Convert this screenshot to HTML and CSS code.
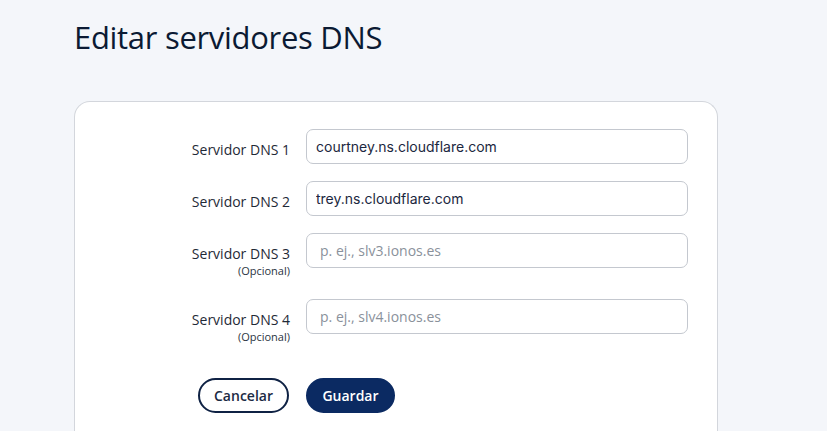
FILE: index.html
```html
<!DOCTYPE html>
<html lang="es">
<head>
<meta charset="utf-8">
<title>Editar servidores DNS</title>
<link rel="stylesheet" href="styles.css">
</head>
<body>
<main class="page">
  <h1 class="title">Editar servidores DNS</h1>
  <section class="card">
    <form class="form">
      <label class="label" for="dns1"><span class="label-main">Servidor DNS 1</span></label>
      <input class="field filled" id="dns1" type="text" value="courtney.ns.cloudflare.com">

      <label class="label" for="dns2"><span class="label-main">Servidor DNS 2</span></label>
      <input class="field filled" id="dns2" type="text" value="trey.ns.cloudflare.com">

      <label class="label" for="dns3"><span class="label-main">Servidor DNS 3</span><span class="label-sub">(Opcional)</span></label>
      <input class="field" id="dns3" type="text" placeholder="p. ej., slv3.ionos.es">

      <label class="label" for="dns4"><span class="label-main">Servidor DNS 4</span><span class="label-sub">(Opcional)</span></label>
      <input class="field" id="dns4" type="text" placeholder="p. ej., slv4.ionos.es">

      <button type="button" class="btn btn-outline">Cancelar</button>
      <button type="submit" class="btn btn-primary">Guardar</button>
    </form>
  </section>
</main>
</body>
</html>
```

FILE: styles.css
```css
* { box-sizing: border-box; }
html, body { margin: 0; padding: 0; }
body {
  background: #f4f6fa;
  font-family: "Open Sans", "Liberation Sans", sans-serif;
  color: #1d2a3d;
  height: 431px;
  overflow: hidden;
}
.page {
  padding: 0 0 0 74px;
  width: 718px;
  box-sizing: content-box;
}
.title {
  margin: 0;
  padding-top: 17px;
  height: 101px;
  font-family: "Open Sans", "Liberation Sans", sans-serif;
  font-weight: 400;
  font-size: 31px;
  letter-spacing: -0.3px;
  line-height: 40px;
  color: #0b1a33;
}
.card {
  width: 644px;
  height: 330px;
  background: #ffffff;
  border: 1px solid #d3d6dc;
  border-bottom: none;
  border-radius: 16px 16px 0 0;
  padding: 27px 29px 0 0;
}
.form {
  display: grid;
  grid-template-columns: 215px 382px;
  grid-template-rows: 35px 35px 49px 49px auto;
  column-gap: 16px;
  row-gap: 17px;
}
.label {
  display: flex;
  flex-direction: column;
  align-items: flex-end;
  padding-top: 11px;
  text-align: right;
}
.label-main {
  font-size: 14px;
  line-height: 20px;
  color: #1f2a37;
}
.label-sub {
  font-size: 11px;
  line-height: 14px;
  color: #2a3442;
}
.field {
  height: 35px;
  width: 382px;
  border: 1px solid #c4c8cf;
  border-radius: 7px;
  padding: 0 13px;
  font-family: "Open Sans", sans-serif;
  font-size: 14px;
  color: #1b2740;
  background: #fff;
  outline: none;
}
.field.filled {
  padding-left: 9px;
  font-family: "Inter", "Open Sans", sans-serif;
  font-size: 14px;
}
.field::placeholder {
  color: #8a919b;
}
.btn {
  margin-top: 13px;
  height: 35px;
  border-radius: 18px;
  font-family: "Open Sans", sans-serif;
  font-size: 14px;
  font-weight: 600;
  padding: 0;
  cursor: pointer;
}
.btn-outline {
  justify-self: end;
  width: 91px;
  background: #fff;
  border: 2px solid #0f2244;
  color: #1b2a44;
  margin-right: 1px;
}
.btn-primary {
  justify-self: start;
  width: 89px;
  background: #0b2a62;
  border: 2px solid #0b2a62;
  color: #ffffff;
}
```
